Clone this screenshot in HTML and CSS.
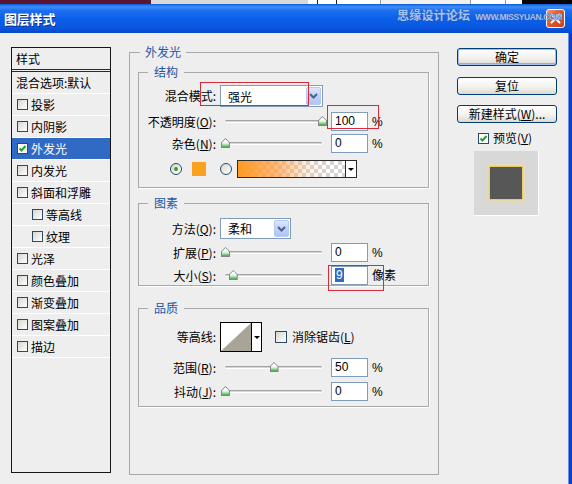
FILE: index.html
```html
<!DOCTYPE html>
<html>
<head>
<meta charset="utf-8">
<title>图层样式</title>
<link rel="stylesheet" href="styles.css">
</head>
<body>
<div class="window">
  <div class="topstrip">
    <span class="seg s1"></span><span class="seg s2"></span><span class="seg s3"></span><span class="seg s4"></span><span class="seg s5"></span><span class="seg s6"></span><span class="seg s7"></span><span class="seg s8"></span>
  </div>
  <div class="titlebar">
    <span class="title">图层样式</span>
    <span class="close"><svg width="11" height="11" viewBox="0 0 11 11"><path d="M1.5 1.5 L9.5 9.5 M9.5 1.5 L1.5 9.5" stroke="#fff" stroke-width="2" stroke-linecap="round"/></svg></span>
  </div>
  <div class="watermark"><span class="wm-cn">思缘设计论坛</span><span class="wm-en">WWW.MISSYUAN.COM</span></div>

  <div class="body">
    <div class="stylelist">
      <div class="list-head">样式</div>
      <div class="list-row">混合选项:默认</div>
      <div class="list-row"><span class="cb"></span>投影</div>
      <div class="list-row"><span class="cb"></span>内阴影</div>
      <div class="list-row sel"><span class="cb on"><svg width="9" height="9" viewBox="0 0 9 9"><path d="M1.5 4.5 L3.5 6.5 L7.5 2" fill="none" stroke="#21A121" stroke-width="2"/></svg></span>外发光</div>
      <div class="list-row"><span class="cb"></span>内发光</div>
      <div class="list-row"><span class="cb"></span>斜面和浮雕</div>
      <div class="list-row sub"><span class="cb"></span>等高线</div>
      <div class="list-row sub"><span class="cb"></span>纹理</div>
      <div class="list-row"><span class="cb"></span>光泽</div>
      <div class="list-row"><span class="cb"></span>颜色叠加</div>
      <div class="list-row"><span class="cb"></span>渐变叠加</div>
      <div class="list-row"><span class="cb"></span>图案叠加</div>
      <div class="list-row"><span class="cb"></span>描边</div>
    </div>

    <fieldset class="group outer">
      <legend>外发光</legend>

      <fieldset class="group inner g-struct">
        <legend>结构</legend>
        <div class="row r-select">
          <span class="lbl">混合模式:</span>
          <div class="select w-blend"><span class="val">强光</span><span class="dd"><svg width="9" height="6" viewBox="0 0 9 6"><path d="M1 1 L4.5 4.5 L8 1" fill="none" stroke="#4D6185" stroke-width="2"/></svg></span></div>
        </div>
        <div class="row r-field mt5">
          <span class="lbl">不透明度(<u>O</u>):</span>
          <div class="slider"><div class="track"><span class="thumb" style="left:100%"></span></div></div>
          <div class="num">100</div><span class="unit">%</span>
        </div>
        <div class="row r-field mt3">
          <span class="lbl">杂色(<u>N</u>):</span>
          <div class="slider"><div class="track"><span class="thumb" style="left:0%"></span></div></div>
          <div class="num">0</div><span class="unit">%</span>
        </div>
        <div class="row r-color">
          <span class="radio on"></span>
          <span class="swatch"></span>
          <span class="radio r2"></span>
          <div class="gbar"><span class="gfill"></span><span class="garrow"><span class="tri"></span></span></div>
        </div>
      </fieldset>

      <fieldset class="group inner g-elem">
        <legend>图素</legend>
        <div class="row r-select2">
          <span class="lbl">方法(<u>Q</u>):</span>
          <div class="select w-method"><span class="val">柔和</span><span class="dd"><svg width="9" height="6" viewBox="0 0 9 6"><path d="M1 1 L4.5 4.5 L8 1" fill="none" stroke="#4D6185" stroke-width="2"/></svg></span></div>
        </div>
        <div class="row r-field mt4">
          <span class="lbl">扩展(<u>P</u>):</span>
          <div class="slider"><div class="track"><span class="thumb" style="left:0%"></span></div></div>
          <div class="num">0</div><span class="unit">%</span>
        </div>
        <div class="row r-field mt4">
          <span class="lbl">大小(<u>S</u>):</span>
          <div class="slider"><div class="track"><span class="thumb" style="left:8%"></span></div></div>
          <div class="num"><span class="hl">9</span></div><span class="unit">像素</span>
        </div>
      </fieldset>

      <fieldset class="group inner g-qual">
        <legend>品质</legend>
        <div class="row r-contour">
          <span class="lbl">等高线:</span>
          <div class="contour">
            <span class="curve"><svg width="30" height="28" viewBox="0 0 30 28"><polygon points="0,28 30,0 30,28" fill="#A9A498"/></svg></span>
            <span class="carrow"><span class="tri"></span></span>
          </div>
          <span class="cb aa"></span><span class="cbtext">消除锯齿(<u>L</u>)</span>
        </div>
        <div class="row r-field mt6">
          <span class="lbl">范围(<u>R</u>):</span>
          <div class="slider"><div class="track"><span class="thumb" style="left:50%"></span></div></div>
          <div class="num">50</div><span class="unit">%</span>
        </div>
        <div class="row r-field mt5">
          <span class="lbl">抖动(<u>J</u>):</span>
          <div class="slider"><div class="track"><span class="thumb" style="left:0%"></span></div></div>
          <div class="num">0</div><span class="unit">%</span>
        </div>
      </fieldset>
    </fieldset>

    <div class="actions">
      <div class="btn default">确定</div>
      <div class="btn b2">复位</div>
      <div class="btn b3">新建样式(<u>W</u>)...</div>
      <div class="prev-row"><span class="cb on"><svg width="9" height="9" viewBox="0 0 9 9"><path d="M1.5 4.5 L3.5 6.5 L7.5 2" fill="none" stroke="#21A121" stroke-width="2"/></svg></span>预览(<u>V</u>)</div>
      <div class="preview"><span class="preview-sq"></span></div>
    </div>
  </div>

  <span class="mark m1"></span>
  <span class="mark m2"></span>
  <span class="mark m3"></span>
</div>
</body>
</html>
```

FILE: styles.css
```css
html, body {
  margin: 0;
  padding: 0;
}
body {
  font-family: "Noto Sans CJK SC", "Liberation Sans", sans-serif;
  font-size: 12px;
  line-height: 14px;
  color: #000;
  background: #EEEEEE;
}
.window {
  width: 572px;
  height: 484px;
  display: flex;
  flex-direction: column;
  position: relative;
  overflow: hidden;
}

/* strip of the desktop above the window */
.topstrip {
  height: 4px;
  flex: none;
  display: flex;
  background: #050505;
}
.seg { display: block; height: 4px; box-sizing: border-box; }
.s1 { width: 151px; background: #5A1535; }
.s2 { width: 157px; background: #D8D8D8; }
.s3 { width: 9px; background: #fff; }
.s4 { width: 20px; background: #fff; border-left: 1px solid #222; border-right: 1px solid #222; }
.s5 { width: 43px; background: #fff; }
.s6 { width: 90px; background: #F0F0F0; border-left: 1px solid #999; }
.s7 { width: 35px; background: #fff; border-left: 1px solid #999; }
.s8 { width: 17px; background: #fff; border-left: 1px solid #999; }

/* title bar */
.titlebar {
  height: 29px;
  flex: none;
  display: flex;
  align-items: center;
  padding: 0 7px 0 4px;
  background: linear-gradient(to bottom, #0B5AD8 0%, #3D8FF8 10%, #1F6FF0 22%, #0C5FE9 50%, #0A58E2 80%, #0648C8 100%);
}
.title {
  color: #fff;
  font-weight: bold;
  font-size: 13px;
  line-height: 16px;
  letter-spacing: -0.2px;
  text-shadow: 1px 1px 0 #10308A;
}
.close {
  margin-left: auto;
  width: 19px;
  height: 19px;
  box-sizing: border-box;
  border: 1px solid #fff;
  border-radius: 3px;
  background: linear-gradient(135deg, #EE9A7A 0%, #DE5A2E 45%, #C8401A 100%);
  display: flex;
  align-items: center;
  justify-content: center;
  margin-top: -1px;
}
.watermark {
  position: absolute;
  left: 397px;
  top: 8px;
  display: flex;
  align-items: center;
  gap: 5px;
  color: #A6C2F0;
  text-shadow: 0 0 1px #2B57B0, 0 0 1px #2B57B0;
}
.wm-cn {
  font-size: 12px;
  font-weight: bold;
  letter-spacing: 0.2px;
  line-height: 14px;
}
.wm-en {
  font-family: "Liberation Sans", sans-serif;
  font-size: 8.5px;
  font-weight: bold;
  letter-spacing: -0.4px;
  line-height: 10px;
  margin-top: 3px;
}

/* dialog body */
.body {
  flex: 1;
  display: flex;
  align-items: flex-start;
  background: #EEEEEE;
  padding-left: 11px;
  border-right: 3px solid #0A3FCB;
  box-shadow: inset -1px 0 0 #6B8FE0;
}

/* style list */
.stylelist {
  width: 100px;
  height: 426px;
  box-sizing: border-box;
  margin-top: 14px;
  border: 1px solid #161616;
  flex: none;
}
.list-head {
  height: 21px;
  line-height: 21px;
  padding-left: 4px;
  border-bottom: 3px double #2A2A2A;
}
.list-row {
  height: 21px;
  border-bottom: 1px solid #fff;
  display: flex;
  align-items: center;
  padding-left: 4px;
}
.list-row .cb { margin-left: 1px; }
.list-row.sub .cb { margin-left: 16px; }
.list-row.sel {
  background: #316AC5;
  color: #fff;
}
.cb {
  width: 11px;
  height: 11px;
  box-sizing: border-box;
  border: 1px solid #2B4A68;
  background: linear-gradient(135deg, #D6D6D0, #FFFFFF);
  margin-right: 3px;
  flex: none;
  display: flex;
  align-items: center;
  justify-content: center;
}
.cb.on { background: #fff; }

/* group boxes */
fieldset.group {
  margin: 0;
  padding: 0;
  min-width: 0;
  border: 1px solid #A9A9A9;
  box-sizing: border-box;
}
fieldset.group legend {
  font-size: 12px;
  line-height: 14px;
  color: #2456A6;
  padding: 0 5px;
  margin-left: 2px;
}
fieldset.outer {
  flex: none;
  width: 310px;
  height: 430px;
  margin: 12px 18px 0;
  padding: 6px 9px 0 8px;
}
fieldset.inner {
  width: 291px;
  box-shadow: 1px 1px 0 #fff;
}
fieldset.inner legend {
  margin-left: 9px;
  padding: 0 6px;
}
fieldset.g-struct { padding: 6px 0 9px; }
fieldset.g-elem { margin-top: 8px; padding: 8px 0 0; }
fieldset.g-qual { margin-top: 15px; padding: 7px 0 5px; }

.row {
  display: flex;
  align-items: center;
}
.mt3 { margin-top: 3px; }
.mt4 { margin-top: 4px; }
.mt5 { margin-top: 5px; }
.mt6 { margin-top: 6px; }
.r-select { height: 22px; }
.r-select2 { height: 21px; }
.r-field { height: 19px; }
.r-color { height: 18px; margin-top: 7px; padding-left: 31px; }
.r-contour { height: 30px; }

.lbl {
  width: 77px;
  flex: none;
  text-align: right;
  margin-right: 4px;
  white-space: nowrap;
}
u { text-decoration: underline; text-underline-offset: 1px; }

/* combo boxes */
.select {
  height: 100%;
  box-sizing: border-box;
  border: 1px solid #7F9DB9;
  background: #fff;
  display: flex;
  align-items: center;
  padding: 1px;
  flex: none;
}
.w-blend { width: 103px; }
.w-method { width: 71px; }
.val {
  flex: 1;
  padding-left: 6px;
  padding-top: 1px;
}
.dd {
  width: 15px;
  align-self: stretch;
  box-sizing: border-box;
  border: 1px solid #B5C8F2;
  border-radius: 2px;
  background: linear-gradient(to bottom, #DCE6FD, #C0D2FA 50%, #AFC5F6);
  display: flex;
  align-items: center;
  justify-content: center;
}

/* sliders */
.slider {
  width: 111px;
  height: 19px;
  flex: none;
  display: flex;
  align-items: center;
}
.track {
  flex: 1;
  margin: 0 9px 0 5px;
  height: 3px;
  box-sizing: border-box;
  border-top: 1px solid #A2A2A2;
  border-bottom: 1px solid #FFFFFF;
  border-radius: 2px;
  background: #D6D6D6;
  position: relative;
}
.thumb {
  position: absolute;
  top: -5px;
  width: 9px;
  height: 10px;
  margin-left: -4px;
  background: #7E8C80;
  clip-path: polygon(50% 0, 100% 45%, 100% 100%, 0 100%, 0 45%);
}
.thumb::after {
  content: "";
  position: absolute;
  left: 1px; top: 1px; right: 1px; bottom: 1px;
  background: linear-gradient(to bottom, #FFFFFF 35%, #D4EED4 60%, #45A84B 100%);
  clip-path: polygon(50% 0, 100% 45%, 100% 100%, 0 100%, 0 45%);
}

/* number fields */
.num {
  width: 37px;
  height: 19px;
  box-sizing: border-box;
  border: 1px solid #7F9DB9;
  background: #fff;
  font-family: "Liberation Sans", "Noto Sans CJK SC", sans-serif;
  font-size: 12px;
  line-height: 17px;
  padding-left: 3px;
  flex: none;
}
.hl {
  background: #316AC5;
  color: #fff;
  padding: 0 1px;
}
.unit {
  margin-left: 4px;
  font-family: "Liberation Sans", "Noto Sans CJK SC", sans-serif;
  white-space: nowrap;
}

/* color row */
.radio {
  width: 12px;
  height: 12px;
  box-sizing: border-box;
  border: 1px solid #2B4A68;
  border-radius: 50%;
  background: linear-gradient(135deg, #D6D6D0, #FFFFFF);
  display: flex;
  align-items: center;
  justify-content: center;
  flex: none;
}
.radio.on::after {
  content: "";
  width: 4px;
  height: 4px;
  border-radius: 50%;
  background: #2BA22B;
}
.radio.r2 { margin-left: 14px; }
.swatch {
  width: 14px;
  height: 14px;
  margin-left: 10px;
  background: #F9A21F;
  flex: none;
}
.gbar {
  width: 120px;
  height: 18px;
  margin-left: 5px;
  box-sizing: border-box;
  border: 1px solid #2A2A2A;
  display: flex;
  flex: none;
}
.gfill {
  flex: 1;
  background:
    linear-gradient(to right, #FF9A22 0%, rgba(255,160,70,0.75) 35%, rgba(255,190,140,0.25) 65%, rgba(255,255,255,0) 85%),
    conic-gradient(#D4D4D4 25%, #FFFFFF 0 50%, #D4D4D4 0 75%, #FFFFFF 0) 0 0 / 8px 8px;
}
.garrow {
  width: 10px;
  border-left: 1px solid #2A2A2A;
  background: #fff;
  display: flex;
  align-items: center;
  justify-content: center;
}
.tri {
  width: 0;
  height: 0;
  border-left: 3px solid transparent;
  border-right: 3px solid transparent;
  border-top: 3px solid #000;
}

/* contour */
.contour {
  width: 42px;
  height: 30px;
  box-sizing: border-box;
  border: 1px solid #000;
  background: #fff;
  display: flex;
  flex: none;
}
.curve { display: block; width: 30px; height: 28px; }
.curve svg { display: block; }
.carrow {
  flex: 1;
  border-left: 1px solid #000;
  display: flex;
  align-items: center;
  justify-content: center;
}
.cb.aa {
  width: 12px;
  height: 12px;
  margin-left: 13px;
}
.cbtext { margin-left: 2px; white-space: nowrap; }

/* right column */
.actions {
  width: 100px;
  flex: none;
  margin-top: 15px;
  display: flex;
  flex-direction: column;
}
.btn {
  height: 18px;
  box-sizing: border-box;
  border: 1px solid #003C74;
  border-radius: 3px;
  background: linear-gradient(to bottom, #FFFFFF, #F3F2EE 55%, #DEDAD0);
  text-align: center;
  line-height: 16px;
  white-space: nowrap;
}
.btn.default { box-shadow: inset 0 0 0 1px #A7C0EE, inset 0 -2px 0 0 #8FAEE6; }
.b2 { margin-top: 11px; }
.b3 { margin-top: 10px; }
.prev-row {
  margin-top: 8px;
  padding-left: 21px;
  display: flex;
  align-items: center;
  height: 14px;
}
.prev-row .cb { margin-right: 4px; }
.preview {
  margin: 6px 0 0 17px;
  width: 65px;
  height: 65px;
  box-sizing: border-box;
  background: #D8D8D8;
  border-right: 1px solid #fff;
  border-bottom: 1px solid #fff;
  display: flex;
  align-items: center;
  justify-content: center;
}
.preview-sq {
  width: 32px;
  height: 32px;
  background: #575757;
  box-shadow: 0 0 1px 1px #E9CD62, 0 0 3px 2px rgba(246,226,150,0.8);
}

/* red annotation boxes drawn over the screenshot */
.mark {
  position: absolute;
  box-sizing: border-box;
  border: 1px solid #D62B38;
}
.m1 { left: 200px; top: 82px; width: 109px; height: 24px; }
.m2 { left: 327px; top: 105px; width: 52px; height: 24px; }
.m3 { left: 328px; top: 265px; width: 56px; height: 26px; }
```
